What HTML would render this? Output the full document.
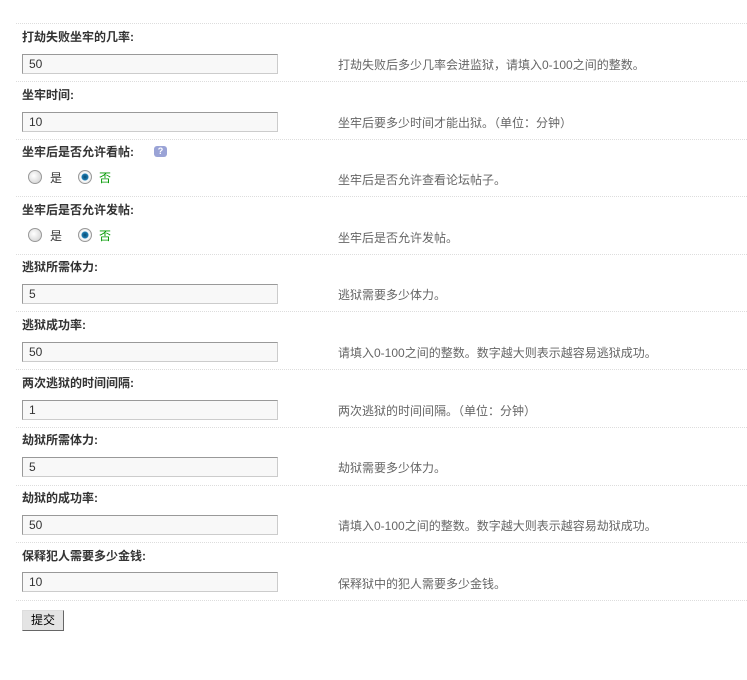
<!DOCTYPE html>
<html><head><meta charset="utf-8"><style>
body{margin:0;width:747px;height:680px;background:#fff;font-family:"Liberation Sans","Noto Sans CJK SC",sans-serif;font-size:12px;color:#333;position:relative;overflow:hidden}
.line{position:absolute;left:16px;right:0;border-top:1px dotted #ddd;height:0}
.lb{position:absolute;left:22px;font-weight:bold;color:#333;font-size:12px;line-height:16px}
.in{position:absolute;left:22px;width:254px;height:18px;border:1px solid #999;border-right-color:#ccc;border-bottom-color:#ccc;background:#f8f8f8;font-size:12px;line-height:18px;padding-left:6px;box-sizing:border-box;width:256px;height:20px;color:#333}
.ds{position:absolute;left:338px;color:#666;font-size:12px;line-height:16px}
.r{position:absolute;width:14px;height:14px;border-radius:50%;border:1px solid #999;background:radial-gradient(circle at 40% 40%,#fff,#ccc);box-sizing:border-box}
.r.on{background:radial-gradient(circle,#0a4a70 0,#1a7ab0 3px,#fff 4px,#ddd 7px)}
.q{position:absolute;width:13px;height:11px;background:#9aa3d6;border-radius:3px;color:#fff;font-size:9px;line-height:11px;text-align:center;font-weight:bold}
.btn{position:absolute;left:22px;top:610px;width:42px;height:21px;border:1px solid #666;border-top-color:#ddd;border-left-color:#ddd;background:#e4e4e4;box-sizing:border-box;text-align:center;line-height:19px;font-size:12px;color:#000}
</style></head><body>
<div class="line" style="top:23px"></div>
<div class="lb" style="top:29px">打劫失败坐牢的几率:</div>
<div class="in" style="top:54px">50</div>
<div class="ds" style="top:57px">打劫失败后多少几率会进监狱，请填入0-100之间的整数。</div>
<div class="line" style="top:81px"></div>
<div class="lb" style="top:87px">坐牢时间:</div>
<div class="in" style="top:112px">10</div>
<div class="ds" style="top:115px">坐牢后要多少时间才能出狱。（单位：分钟）</div>
<div class="line" style="top:139px"></div>
<div class="lb" style="top:144px">坐牢后是否允许看帖:</div>
<div class="q" style="left:154px;top:146px">?</div>
<div class="r" style="left:28px;top:170px"></div><div style="position:absolute;left:50px;top:169px">是</div>
<div class="r on" style="left:78px;top:170px"></div><div style="position:absolute;left:99px;top:169px;color:#090">否</div>
<div class="ds" style="top:172px">坐牢后是否允许查看论坛帖子。</div>
<div class="line" style="top:196px"></div>
<div class="lb" style="top:202px">坐牢后是否允许发帖:</div>
<div class="r" style="left:28px;top:228px"></div><div style="position:absolute;left:50px;top:227px">是</div>
<div class="r on" style="left:78px;top:228px"></div><div style="position:absolute;left:99px;top:227px;color:#090">否</div>
<div class="ds" style="top:230px">坐牢后是否允许发帖。</div>
<div class="line" style="top:254px"></div>
<div class="lb" style="top:259px">逃狱所需体力:</div>
<div class="in" style="top:284px">5</div>
<div class="ds" style="top:287px">逃狱需要多少体力。</div>
<div class="line" style="top:311px"></div>
<div class="lb" style="top:317px">逃狱成功率:</div>
<div class="in" style="top:342px">50</div>
<div class="ds" style="top:345px">请填入0-100之间的整数。数字越大则表示越容易逃狱成功。</div>
<div class="line" style="top:369px"></div>
<div class="lb" style="top:375px">两次逃狱的时间间隔:</div>
<div class="in" style="top:400px">1</div>
<div class="ds" style="top:403px">两次逃狱的时间间隔。（单位：分钟）</div>
<div class="line" style="top:427px"></div>
<div class="lb" style="top:432px">劫狱所需体力:</div>
<div class="in" style="top:457px">5</div>
<div class="ds" style="top:460px">劫狱需要多少体力。</div>
<div class="line" style="top:485px"></div>
<div class="lb" style="top:490px">劫狱的成功率:</div>
<div class="in" style="top:515px">50</div>
<div class="ds" style="top:518px">请填入0-100之间的整数。数字越大则表示越容易劫狱成功。</div>
<div class="line" style="top:542px"></div>
<div class="lb" style="top:548px">保释犯人需要多少金钱:</div>
<div class="in" style="top:572px">10</div>
<div class="ds" style="top:576px">保释狱中的犯人需要多少金钱。</div>
<div class="line" style="top:600px"></div>
<div class="btn">提交</div>
</body></html>
